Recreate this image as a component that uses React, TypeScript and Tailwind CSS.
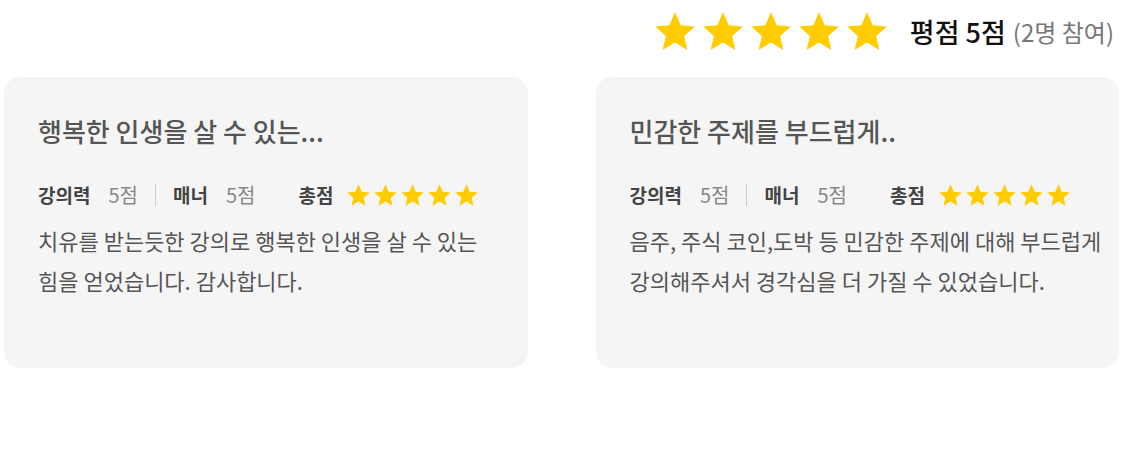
import React from "react";

const STAR =
  "M12 17.27L18.18 21l-1.64-7.03L22 9.24l-7.19-.61L12 2 9.19 8.63 2 9.24l5.46 4.73L5.82 21z";

const Star = ({ size }: { size: number }) => (
  <svg width={size} height={size} viewBox="0 0 24 24" className="shrink-0">
    <path d={STAR} fill="#ffcc00" />
  </svg>
);

interface Review {
  title: string;
  lecture: number;
  manner: number;
  body: string[];
}

const reviews: Review[] = [
  {
    title: "행복한 인생을 살 수 있는...",
    lecture: 5,
    manner: 5,
    body: ["치유를 받는듯한 강의로 행복한 인생을 살 수 있는", "힘을 얻었습니다. 감사합니다."],
  },
  {
    title: "민감한 주제를 부드럽게..",
    lecture: 5,
    manner: 5,
    body: ["음주, 주식 코인,도박 등 민감한 주제에 대해 부드럽게", "강의해주셔서 경각심을 더 가질 수 있었습니다."],
  },
];

const ReviewCard = ({ review }: { review: Review }) => (
  <div className="h-[291px] rounded-[16px] bg-[#f5f5f5] pl-[34px] pt-[34px]">
    <p className="text-[26px] leading-[40px] font-medium text-[#555]">
      {review.title}
    </p>
    <div className="mt-[30px] flex items-center h-[28px] text-[19px]">
      <span className="font-bold text-[#444]">강의력</span>
      <span className="ml-[18px] text-[20px] text-[#888]">{review.lecture}점</span>
      <span className="mx-[17px] h-[22px] w-px bg-[#ccc]" />
      <span className="font-bold text-[#444]">매너</span>
      <span className="ml-[18px] text-[20px] text-[#888]">{review.manner}점</span>
      <span className="ml-[43px] font-bold text-[#444]">총점</span>
      <div className="ml-[12px] flex">
        {[0, 1, 2, 3, 4].map((i) => (
          <Star key={i} size={27} />
        ))}
      </div>
    </div>
    <div className="mt-[11px] text-[22px] leading-[40px] text-[#555]">
      {review.body.map((line, i) => (
        <p key={i}>{line}</p>
      ))}
    </div>
  </div>
);

export default function App() {
  return (
    <div
      className="w-[1124px] h-[474px] bg-white px-[4px]"
      style={{ fontFamily: "'Noto Sans CJK KR', 'Noto Sans', sans-serif" }}
    >
      <div className="flex items-center justify-end pt-[8px] pr-[6px]">
        <div className="flex">
          {[0, 1, 2, 3, 4].map((i) => (
            <Star key={i} size={48} />
          ))}
        </div>
        <span className="ml-[19px] text-[27px] font-medium text-[#111]">평점 5점</span>
        <span className="ml-[7px] text-[24px] text-[#777]">(2명 참여)</span>
      </div>
      <div className="mt-[21px] grid grid-cols-2 gap-[68px] pr-[1px]">
        {reviews.map((r, i) => (
          <ReviewCard key={i} review={r} />
        ))}
      </div>
    </div>
  );
}
